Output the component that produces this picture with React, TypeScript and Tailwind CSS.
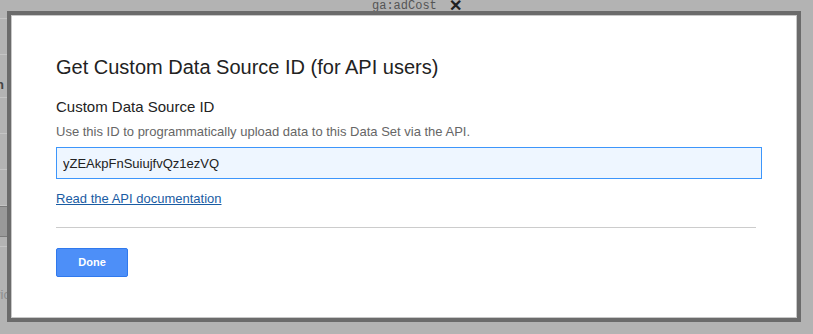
export default function App() {
  const rows = ["h-[19px]", "h-[36px]", "h-[43px]", "h-[36px]", "h-[36px]", "h-[36px]"];

  return (
    <div className="relative h-[334px] w-[813px] overflow-hidden bg-[#b3b3b3] font-['Liberation_Sans',Arial,sans-serif]">
      {/* page behind the dialog */}
      <div className="flex w-[40px] flex-col">
        {rows.map((h, i) => (
          <div key={i} className={`${h} border-b border-[#c4c4c4]`}>
            {i === 2 && (
              <span className="mt-[23px] block -ml-[12px] text-[13px] leading-[14px] font-bold text-[#444]">nn</span>
            )}
          </div>
        ))}
        <div className="h-[31px] border-y border-[#7c7c7c] bg-[#999]" />
        <div className="h-[10px] border-b border-[#c4c4c4]" />
        <span className="mt-[38px] -ml-[6px] text-[13px] text-[#8d8d8d]">vic</span>
      </div>
      <div className="absolute left-[372px] top-[-6px] flex items-center gap-[12px]">
        <span className="font-['Liberation_Mono',monospace] text-[12px] text-[#555]">ga:adCost</span>
        <span className="text-[16px] font-bold text-[#222]">✕</span>
      </div>

      {/* dialog */}
      <div className="absolute left-[7px] top-[11px] h-[311px] w-[794px] border-4 border-[#6b6b6b]">
        <div className="flex h-full flex-col border border-[#c8c8c8] bg-white pl-[44px] pt-[39px]">
          <h2 className="text-[20px] leading-[24px] text-[#222]">
            Get Custom Data Source ID (for API users)
          </h2>
          <div className="mt-[18px] text-[15px] leading-[20px] text-[#222]">Custom Data Source ID</div>
          <p className="mt-[7px] text-[13px] leading-[16px] text-[#666]">
            Use this ID to programmatically upload data to this Data Set via the API.
          </p>
          <input
            readOnly
            value="yZEAkpFnSuiujfvQz1ezVQ"
            className="mt-[7px] h-[32px] w-[706px] border border-[#3d96fb] bg-[#eef6ff] px-[6px] text-[13px] text-[#222] outline-none"
          />
          <a href="#" className="mt-[12px] self-start text-[13px] leading-[16px] text-[#1a5ca3] underline">
            Read the API documentation
          </a>
          <div className="mt-[20px] h-px w-[700px] bg-[#cccccc]" />
          <button className="mt-[20px] h-[29px] w-[72px] rounded-[2px] border border-[#3079ed] bg-[#4d8ff8] text-[11px] font-bold text-white">
            Done
          </button>
        </div>
      </div>
    </div>
  );
}
